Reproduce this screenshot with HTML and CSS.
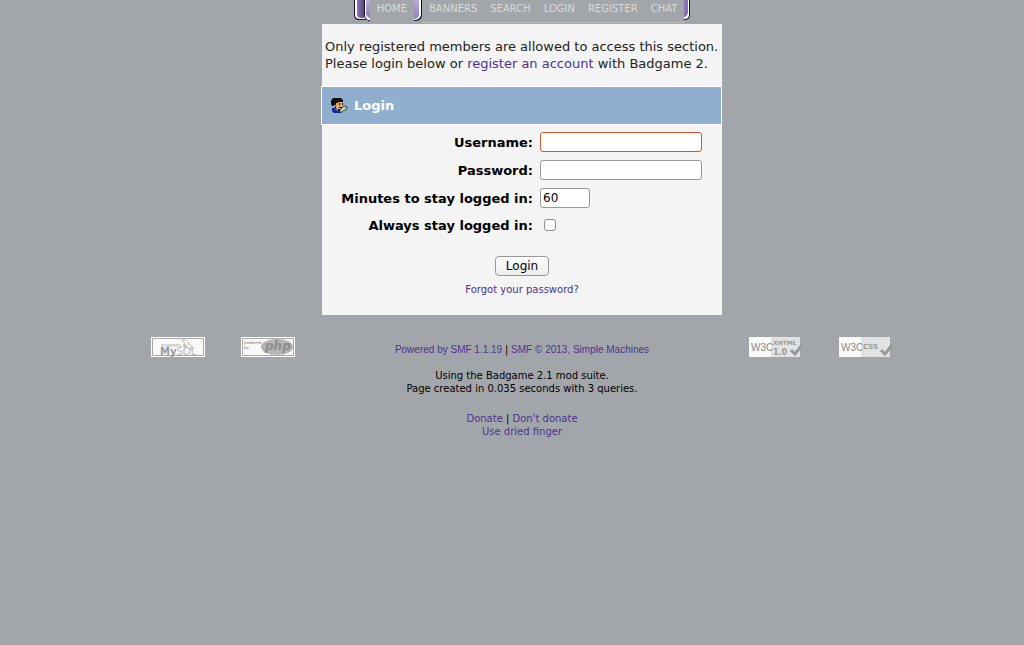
FILE: index.html
```
<!DOCTYPE html>
<html lang="en">
<head>
<meta charset="utf-8">
<title>Login</title>
<link rel="stylesheet" href="styles.css">
</head>
<body>
<nav class="menu">
  <svg class="cap-left" viewBox="0 0 16 22" aria-hidden="true">
    <defs>
      <linearGradient id="shade" x1="0" x2="1" y1="0" y2="0"><stop offset="0" stop-color="#8876b8"/><stop offset="1" stop-color="#584681"/></linearGradient>
      <linearGradient id="light" x1="0" x2="0" y1="0" y2="1"><stop offset="0" stop-color="#b7aedb"/><stop offset="1" stop-color="#8c7cbc"/></linearGradient>
    </defs>
    <path d="M0 0H12V20H5Q0 20 0 15Z" fill="#11112f"/>
    <path d="M1 0H11V19H6Q1 19 1 15Z" fill="#fff"/>
    <path d="M3 0H10V18H7Q3 18 3 14Z" fill="url(#shade)"/>
    <path d="M10 0H16V21Q10 20 10 15Z" fill="#fff"/>
    <path d="M10.500 0V15Q11 20 16 21" fill="none" stroke="#14142e"/>
    <path d="M12 0H16V18Q12 17 12 13Z" fill="url(#light)"/>
  </svg>
  <a class="tab tab-active" href="#">HOME</a>
  <svg class="cap-mid" viewBox="0 0 9 22" aria-hidden="true">
    <path d="M1 21Q9 21 9 15V0H2V17Z" fill="#11112f"/>
    <path d="M1 20Q7 20 8 15V0H2V17Z" fill="#fff"/>
    <path d="M1 0H6V14Q6 18 2 19L1 13Z" fill="url(#light)"/>
  </svg>
  <span class="tabs">
    <a class="tab" href="#">BANNERS</a>
    <a class="tab" href="#">SEARCH</a>
    <a class="tab" href="#">LOGIN</a>
    <a class="tab" href="#">REGISTER</a>
    <a class="tab" href="#">CHAT</a>
  </span>
  <svg class="cap-right" viewBox="0 0 6 22" aria-hidden="true">
    <path d="M0 20Q6 20 6 15V0H0Z" fill="#11112f"/>
    <path d="M0 19Q5 19 5 15V0H0Z" fill="#fff"/>
    <path d="M0 17Q3 17 4 13V0H0Z" fill="#8874b4"/>
  </svg>
</nav>
<main class="panel">
  <p class="notice">Only registered members are allowed to access this section.<br>Please login below or <a href="#">register an account</a> with Badgame 2.</p>
  <h1 class="title">
    <svg class="face" viewBox="0 0 17 17" aria-hidden="true">
      <path d="M1 11H6L8 13H11L12 15L10 16H3L1 14Z" fill="#0d2a86"/>
      <path d="M3 12H7V14H5Z" fill="#2f66cf"/>
      <path d="M4 4H11V7H12V9H11V11L9 13H7L4 10Z" fill="#e0a860"/>
      <path d="M1 2L2 1H10L12 3V5H7V6H5V8H3V9H1L0 7V4Z" fill="#14100c"/>
      <path d="M8 6H9V8H8ZM11 6H12V8H11ZM8 10H11V11H8ZM4 9H5V11H4ZM7 12H10V13H7Z" fill="#2a190c"/>
      <path d="M9 13L13 9H15L16 10V12L15 13H13L11 15H9Z" fill="#c5dcb0" stroke="#3f5a48"/>
      <path d="M14 10H15V11H14Z" fill="#284830"/>
    </svg>
    Login
  </h1>
  <form class="form">
    <div class="fields">
      <label for="user">Username:</label><input class="text wide focused" id="user" type="text">
      <label for="pass">Password:</label><input class="text wide" id="pass" type="password">
      <label for="mins">Minutes to stay logged in:</label><input class="text short" id="mins" type="text" value="60">
      <label for="always">Always stay logged in:</label><input class="check" id="always" type="checkbox">
    </div>
    <button class="submit" type="button">Login</button>
    <a class="forgot" href="#">Forgot your password?</a>
  </form>
</main>
<footer class="footer">
  <div class="badges">
    <a href="#" aria-label="Powered by MySQL"><svg class="badge" viewBox="0 0 54 20">
      <path d="M0 0H54V20H0Z" fill="#fff"/><path d="M1.500 1.500H52.500V18.500H1.500Z" fill="#f9f9f9" stroke="#a7a7a7"/>
      <text class="tiny" x="10" y="10">POWERED BY</text><text class="mysql" x="9" y="18"><tspan class="strong">My</tspan>SQL</text>
      <path d="M31 3Q36 2 38 7L43 11L39 11L41 14M31 3L34 7L33 10L36 9" fill="none" stroke="#b8b8b8"/>
    </svg></a>
    <a href="#" aria-label="Powered by PHP"><svg class="badge" viewBox="0 0 54 20">
      <path d="M0 0H54V20H0Z" fill="#fff"/><path d="M1.500 1.500H52.500V18.500H1.500Z" fill="#f9f9f9" stroke="#a7a7a7"/>
      <text class="tiny dark" x="3" y="7">powered</text><text class="tiny dark" x="3" y="12">by</text>
      <ellipse cx="36" cy="10" rx="16" ry="8" fill="#b5b5b5"/><text class="php" x="24" y="13">php</text>
    </svg></a>
  </div>
  <div class="credits">
    <p class="powered"><a href="#">Powered by SMF 1.1.19</a> <span class="bar">|</span> <a href="#">SMF © 2013, Simple Machines</a></p>
    <p class="stats">Using the Badgame 2.1 mod suite.<br>Page created in 0.035 seconds with 3 queries.</p>
    <p class="links"><a href="#">Donate</a> | <a href="#">Don't donate</a><br><a href="#">Use dried finger</a></p>
  </div>
  <div class="badges">
    <a href="#" aria-label="Valid XHTML 1.0"><svg class="badge" viewBox="0 0 54 20">
      <path d="M0 0H51V20H0Z" fill="#e2e2e2"/><path d="M0 0H22V20H0Z" fill="#fafafa"/>
      <text class="w3c" x="2" y="14">W3C</text><text class="spec" x="24" y="8">XHTML</text><text class="spec num" x="24" y="18">1.0</text>
      <path d="M42 13L46 17L53 8" fill="none" stroke="#999" stroke-width="3"/>
    </svg></a>
    <a href="#" aria-label="Valid CSS"><svg class="badge" viewBox="0 0 54 20">
      <path d="M0 0H51V20H0Z" fill="#e2e2e2"/><path d="M0 0H22V20H0Z" fill="#fafafa"/>
      <text class="w3c" x="2" y="14">W3C</text><text class="spec css" x="24" y="12">CSS</text>
      <path d="M42 13L46 17L53 8" fill="none" stroke="#999" stroke-width="3"/>
    </svg></a>
  </div>
</footer>
</body>
</html>
```
FILE: styles.css
```
body {
  margin: 0;
  padding-left: 20px;
  background: #a2a6aa;
  color: #000;
  font-family: "DejaVu Sans", Verdana, sans-serif;
  font-size: 10px;
  line-height: 13px;
}
a { color: #4b3390; text-decoration: none; }
p { margin: 0; }
svg { display: block; }

.menu {
  display: flex;
  justify-content: center;
  height: 22px;
  margin-bottom: 2px;
}
.cap-left { width: 16px; height: 22px; }
.cap-mid { width: 9px; height: 22px; }
.cap-right { width: 6px; height: 22px; }
.tabs {
  display: flex;
  gap: 13px;
  padding: 0 7px;
  box-sizing: border-box;
  height: 23px;
  border-bottom: 1px solid #bfc2c4;
}
.tab { padding-top: 2px; color: #d8dadc; }
.tab-active { padding-left: 7px; padding-right: 6px; }

.panel {
  box-sizing: border-box;
  width: 400px;
  margin: 0 auto;
  background: #f4f4f4;
}
.notice {
  padding: 14px 3px;
  color: #222;
  font-size: 13px;
  line-height: 17px;
  white-space: nowrap;
}
.title {
  display: flex;
  align-items: center;
  gap: 6px;
  height: 37px;
  margin: 0 0 0 -1px;
  padding-left: 9px;
  border: 1px solid #fff;
  background: #90afcf;
  color: #fff;
  font-size: 13px;
}
.face { width: 17px; height: 17px; }
.form {
  display: flex;
  flex-direction: column;
  align-items: center;
  padding: 7px 0 19px;
}
.fields {
  display: grid;
  grid-template-columns: 211px 1fr;
  column-gap: 7px;
  row-gap: 8px;
  align-self: stretch;
  align-items: center;
  font-size: 13px;
  font-weight: bold;
  text-align: right;
}
.text {
  box-sizing: border-box;
  height: 20px;
  padding: 0 2px;
  border: 1px solid #999;
  border-radius: 3px;
  background: #fff;
  font: 12px "DejaVu Sans", sans-serif;
}
.wide { width: 162px; }
.short { width: 50px; }
.focused { border-color: #d1552d; }
.check {
  appearance: none;
  width: 12px;
  height: 12px;
  margin: 3px 4px;
  border: 1px solid #8e8e8e;
  border-radius: 3px;
  background: #fff;
}
.submit {
  height: 20px;
  margin-top: 22px;
  padding: 0 10px;
  border: 1px solid #999;
  border-radius: 4px;
  background: linear-gradient(#fff, #ececec);
  color: #000;
  font: 12px "DejaVu Sans", sans-serif;
}
.forgot { margin-top: 7px; }

.footer {
  display: flex;
  justify-content: center;
  gap: 95px;
  padding-top: 22px;
}
.badges { display: flex; gap: 36px; }
.badge { width: 54px; height: 20px; }
.credits { min-width: 264px; padding-top: 6px; text-align: center; white-space: nowrap; }
.powered { font-family: "Liberation Sans", Arial, sans-serif; font-size: 10px; }
.bar { font-family: "DejaVu Sans", sans-serif; font-size: 10px; }
.stats { margin-top: 13px; }
.links { margin-top: 17px; }

.tiny { font: 4px "DejaVu Sans", sans-serif; fill: #aaa; }
.dark { fill: #777; }
.mysql { font: 10px "DejaVu Sans", sans-serif; fill: #bbb; }
.strong { font-weight: bold; fill: #999; }
.php { font: italic bold 12px "DejaVu Sans", sans-serif; fill: #8c8c8c; }
.w3c { font: 10px "Liberation Sans", sans-serif; fill: #888; }
.spec { font: bold 6px "DejaVu Sans", sans-serif; fill: #999; }
.num { font-size: 8px; }
.css { font-size: 7px; }
```
